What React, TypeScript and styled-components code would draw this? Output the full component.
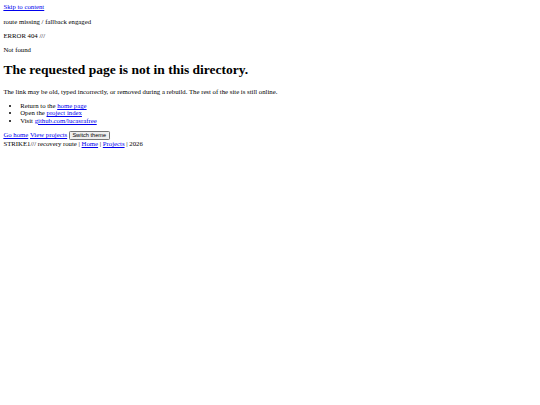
import styled, { createGlobalStyle } from "styled-components";

// screenshot is a 1280px page shrunk to 540px, so every default size is scaled by this
const S = 540 / 1280;
const px = (n: number) => `${(n * S).toFixed(3)}px`;

const GlobalStyle = createGlobalStyle`
  html, body {
    background: #ffffff;
  }
  body {
    margin: ${px(8)};
    font-family: "Liberation Serif", "Times New Roman", serif;
    font-size: ${px(16)};
    line-height: ${px(17.6)};
    color: #000000;
  }
  a {
    color: #0000ee;
    text-decoration: underline;
  }
`;

const SkipLink = styled.a``;

const Line = styled.p`
  margin: 1em 0;
`;

const Title = styled.h1`
  font-size: 2em;
  line-height: ${px(39)};
  font-weight: bold;
  margin: 0.67em 0;
`;

const Steps = styled.ul`
  margin: 1em 0;
  padding-left: ${px(40)};
  list-style: disc;
`;

const Actions = styled.div``;

const Button = styled.button`
  font-family: "Liberation Sans", Arial, sans-serif;
  font-size: ${px(13.333)};
  line-height: ${px(15)};
  padding: ${px(1)} ${px(6)};
  margin: 0;
  background: #efefef;
  color: #000000;
  border: 1px solid #767676;
  border-radius: ${px(3)};
  vertical-align: baseline;
`;

const Footer = styled.footer``;

export default function App() {
  return (
    <>
      <GlobalStyle />
      <SkipLink href="#main">Skip to content</SkipLink>
      <Line>route missing / fallback engaged</Line>
      <Line>ERROR 404 ///</Line>
      <Line>Not found</Line>
      <main id="main">
        <Title>The requested page is not in this directory.</Title>
        <Line>
          The link may be old, typed incorrectly, or removed during a rebuild. The rest of the site is still
          online.
        </Line>
        <Steps>
          <li>
            Return to the <a href="#">home page</a>
          </li>
          <li>
            Open the <a href="#">project index</a>
          </li>
          <li>
            Visit <a href="#">github.com/lucasrafree</a>
          </li>
        </Steps>
        <Actions>
          <a href="#">Go home</a> <a href="#">View projects</a> <Button type="button">Switch theme</Button>
        </Actions>
      </main>
      <Footer>
        STRIKE1/// recovery route | <a href="#">Home</a> | <a href="#">Projects</a> | 2026
      </Footer>
    </>
  );
}
